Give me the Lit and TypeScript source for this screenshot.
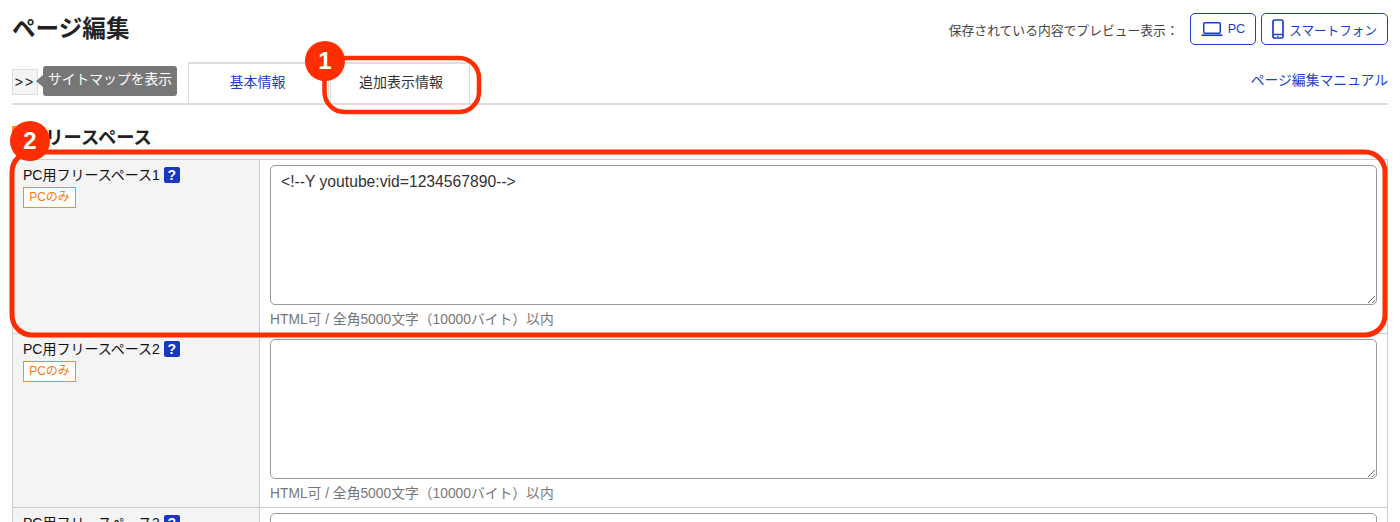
import { LitElement, html, css } from "lit";
import { customElement } from "lit/decorators.js";

const FONT = css`"Liberation Sans", "Noto Sans CJK JP", sans-serif`;

@customElement("app-root")
export class AppRoot extends LitElement {
  static styles = css`
    :host {
      display: block;
      position: relative;
      height: 522px;
      overflow: hidden;
      background: #fff;
      font-family: ${FONT};
      color: #222;
    }
    .page { padding: 0 12px; }
    .top {
      display: flex;
      justify-content: space-between;
      align-items: flex-start;
      height: 62px;
    }
    h1 { margin: 14px 0 0; font-size: 23.6px; line-height: 30px; font-weight: 700; color: #222; }
    .preview { display: flex; align-items: center; margin-top: 13px; gap: 5px; }
    .preview-label { font-size: 12.8px; color: #444; margin-right: 6px; }
    .pbtn {
      display: flex; align-items: center; gap: 5px;
      height: 32px; box-sizing: border-box;
      border: 1px solid #1a3fcf; border-radius: 5px;
      color: #1a3fcf; font-size: 12.6px; padding: 0 10px;
    }
    .pbtn svg { display: block; }
    .tabs {
      display: flex; align-items: flex-start;
      height: 41px;
      border-bottom: 2px solid #ddd;
    }
    .toggle {
      width: 26px; height: 26px; box-sizing: border-box; margin-top: 7px;
      border: 1px solid #ddd; background: #f4f4f4;
      font-size: 14px; line-height: 24px; text-align: center; letter-spacing: 2px; color: #222;
    }
    .tip {
      position: relative; margin: 4px 0 0 5px; width: 134px; height: 30px;
      background: #777; border-radius: 3px; color: #fff;
      font-size: 13.8px; line-height: 28px; text-align: center; white-space: nowrap;
    }
    .tip::before {
      content: ""; position: absolute; left: -7px; top: 9px;
      border-style: solid; border-width: 6px 7px 6px 0;
      border-color: transparent #777 transparent transparent;
    }
    .tab {
      width: 141px; height: 41px; box-sizing: border-box;
      border-style: solid; border-color: #ddd; border-width: 2px 1px 0 1px;
      font-size: 14px; line-height: 37px; text-align: center;
      background: #fff;
    }
    .tab.first { margin-left: 11px; padding-right: 2px; color: #1a3fcf; }
    .tab.second { margin-left: 1px; width: 140px; padding-left: 2px; color: #333; }
    .manual { margin-left: auto; margin-top: 8px; font-size: 13.8px; line-height: 22px; color: #1a3fcf; white-space: nowrap; }
    h2 {
      margin: 21px 0 0; height: 33px;
      font-size: 18.3px; line-height: 24px; font-weight: 700; color: #222;
      display: flex; gap: 7px;
    }
    h2 i { display: block; width: 8px; height: 18px; margin-top: 0; background: #f7941d; }
    table {
      width: 1376px; border-collapse: collapse; table-layout: fixed;
    }
    th, td { border: 1px solid #ccc; vertical-align: top; padding: 0; }
    th {
      width: 247px; background: #f4f4f4; text-align: left; font-weight: 400;
      padding: 5px 10px; font-size: 14px; color: #111; box-sizing: border-box;
    }
    .name { display: flex; align-items: center; gap: 4px; line-height: 20px; white-space: nowrap; }
    .help {
      display: inline-block; width: 16px; height: 16px; background: #1a37c4; border-radius: 2px;
      color: #fff; font-size: 14px; font-weight: 700; line-height: 16px; text-align: center;
    }
    .badge {
      display: block; width: 53px; height: 21px; box-sizing: border-box; margin-top: 2px;
      border: 1px solid #f58a3c; color: #f57a20; background: #fff;
      font-size: 12px; line-height: 19px; text-align: center;
    }
    td { padding: 5px 10px 0; height: 174px; box-sizing: border-box; }
    textarea {
      display: block; width: 1107px; height: 140px; box-sizing: border-box; margin: 0;
      border: 1px solid #999; border-radius: 5px; padding: 6px 10px;
      font-family: ${FONT}; font-size: 15.7px; line-height: 20px; color: #333;
      resize: both; outline: none; background: #fff;
    }
    .note { margin-top: 6px; font-size: 13.8px; line-height: 18px; color: #777; white-space: nowrap; }
    .overlay { position: absolute; left: 0; top: 0; pointer-events: none; }
    .overlay text { font-family: ${FONT}; font-size: 24px; font-weight: 700; fill: #fff; text-anchor: middle; }
  `;

  private row(n: number, value = "") {
    return html`<tr>
      <th>
        <div class="name">PC用フリースペース${n}<span class="help">?</span></div>
        <span class="badge">PCのみ</span>
      </th>
      <td>
        <textarea .value=${value}></textarea>
        <div class="note">HTML可 / 全角5000文字（10000バイト）以内</div>
      </td>
    </tr>`;
  }

  render() {
    return html`
      <div class="page">
        <div class="top">
          <h1>ページ編集</h1>
          <div class="preview">
            <span class="preview-label">保存されている内容でプレビュー表示：</span>
            <span class="pbtn">
              <svg width="22" height="16" viewBox="0 0 22 16" fill="none" stroke="#1a3fcf">
                <rect x="2.75" y="1.75" width="16.5" height="10.5" rx="1" stroke-width="1.5"/>
                <path d="M0.5 14.25h21" stroke-width="1.7"/>
              </svg>
              PC
            </span>
            <span class="pbtn">
              <svg width="12" height="20" viewBox="0 0 12 20" fill="none" stroke="#1a3fcf">
                <rect x="1" y="1" width="10" height="18" rx="1.6" stroke-width="1.7"/>
                <path d="M1 15.5h10" stroke-width="1.4"/>
                <circle cx="6" cy="17.2" r="0.8" fill="#1a3fcf" stroke="none"/>
              </svg>
              スマートフォン
            </span>
          </div>
        </div>
        <div class="tabs">
          <div class="toggle">&gt;&gt;</div>
          <div class="tip">サイトマップを表示</div>
          <div class="tab first">基本情報</div>
          <div class="tab second">追加表示情報</div>
          <div class="manual">ページ編集マニュアル</div>
        </div>
        <h2><i></i>フリースペース</h2>
        <table>
          ${this.row(1, "<!--Y youtube:vid=1234567890-->")}
          ${this.row(2)}
          ${this.row(3)}
        </table>
      </div>
      <svg class="overlay" width="1400" height="522" viewBox="0 0 1400 522" fill="none">
        <rect x="324.5" y="58" width="154.5" height="54" rx="20" stroke="#ff2d00" stroke-width="4.5"/>
        <rect x="12" y="152" width="1373" height="183" rx="20" stroke="#ff2d00" stroke-width="5"/>
        <circle cx="325" cy="61" r="20" fill="#ff2d00"/>
        <circle cx="30" cy="141" r="20" fill="#ff2d00"/>
        <text x="325" y="69">1</text>
        <text x="30" y="149">2</text>
      </svg>
    `;
  }
}
